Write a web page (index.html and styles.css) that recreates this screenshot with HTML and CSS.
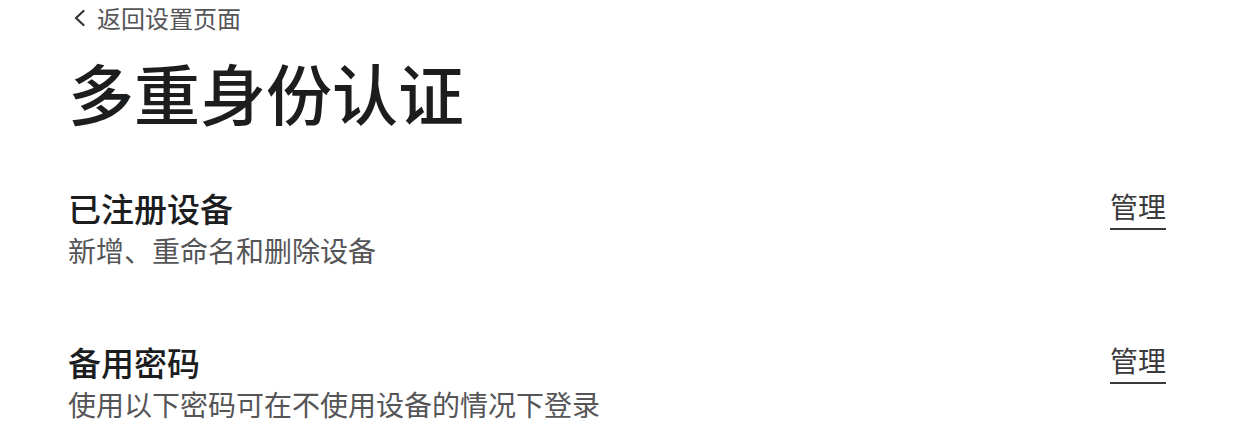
FILE: index.html
```html
<!DOCTYPE html>
<html lang="zh-CN">
<head>
<meta charset="utf-8">
<title>多重身份认证</title>
<link rel="stylesheet" href="styles.css">
</head>
<body>
<div class="page">
  <a class="back" href="#">
    <svg class="chev" width="12" height="18" viewBox="0 0 12 18"><path d="M10.5 2 L3 9 L10.5 16" fill="none" stroke="#333" stroke-width="2.2" stroke-linecap="round" stroke-linejoin="round"/></svg>
    <span>返回设置页面</span>
  </a>
  <h1 class="title">多重身份认证</h1>
  <section class="row">
    <div class="info">
      <h2 class="row-title">已注册设备</h2>
      <p class="row-desc">新增、重命名和删除设备</p>
    </div>
    <a class="manage" href="#">管理</a>
  </section>
  <section class="row">
    <div class="info">
      <h2 class="row-title">备用密码</h2>
      <p class="row-desc">使用以下密码可在不使用设备的情况下登录</p>
    </div>
    <a class="manage" href="#">管理</a>
  </section>
</div>
</body>
</html>
```
FILE: styles.css
```css
html, body {
  margin: 0;
  padding: 0;
  background: #ffffff;
}
body {
  font-family: "Noto Sans CJK SC", "Noto Sans", sans-serif;
  color: #1c1d1f;
}
.page {
  padding: 0 92px 0 68px;
}
.back {
  display: flex;
  align-items: center;
  gap: 12px;
  height: 36px;
  padding-left: 5px;
  color: #555558;
  text-decoration: none;
  font-size: 24px;
  line-height: 36px;
}
.chev {
  flex: none;
}
.title {
  margin: 13px 0 0;
  font-size: 66px;
  font-weight: 500;
  line-height: 84px;
  color: #1c1d1f;
}
.row {
  display: flex;
  justify-content: space-between;
  align-items: flex-start;
}
.row:first-of-type {
  margin-top: 53px;
}
.row + .row {
  margin-top: 70px;
}
.row-title {
  margin: 0;
  font-size: 33px;
  font-weight: 500;
  line-height: 44px;
  color: #1c1d1f;
}
.row-desc {
  margin: 0;
  font-size: 28px;
  line-height: 40px;
  color: #555558;
}
.manage {
  margin-top: 2px;
  padding-bottom: 4px;
  font-size: 28px;
  line-height: 36px;
  color: #3a3a3d;
  text-decoration: none;
  border-bottom: 2px solid #3a3a3d;
}
```
